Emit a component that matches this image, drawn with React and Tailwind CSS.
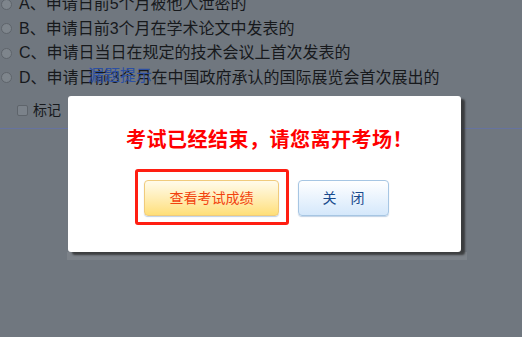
import React from "react";

const font = {
  fontFamily: '"Liberation Sans", Arial, "Noto Sans CJK SC", sans-serif',
};

const options = [
  "A、申请日前5个月被他人泄密的",
  "B、申请日前3个月在学术论文中发表的",
  "C、申请日当日在规定的技术会议上首次发表的",
  "D、申请日前3个月在中国政府承认的国际展览会首次展出的",
];

function Radio() {
  return (
    <span className="w-[11px] h-[11px] rounded-full border border-[#5e646b] bg-[#7e858c] mr-[7px] shrink-0" />
  );
}

export default function App() {
  return (
    <div
      className="relative w-[522px] h-[337px] overflow-hidden bg-[#70777f]"
      style={font}
    >
      {/* page under the mask */}
      <div className="relative mt-[-8px]">
        {options.map((o) => (
          <div
            key={o}
            className="flex items-center h-[24.5px] pl-[1px] text-[16px] text-[#17191c] whitespace-nowrap"
          >
            <Radio />
            <span>{o}</span>
          </div>
        ))}
        <span className="absolute left-[88px] top-[74px] text-[16px] leading-[20px] text-[#2c4fa3]">
          漏题提示
        </span>
        <div className="flex items-center h-[39px] pl-[17px] pt-[2px] text-[14px] text-[#17191c] border-b border-[#6673a0]">
          <span className="w-[11px] h-[11px] rounded-[2px] border border-[#5e646b] bg-[#7b828a] mr-[5px]" />
          <span>标记</span>
        </div>
      </div>

      {/* dialog */}
      <div className="absolute left-[67px] top-[252px] w-[400px] h-[8px] bg-[#7c8289]" />
      <div className="absolute left-[68px] top-[96px] w-[393px] h-[156px] bg-white rounded-[3px] shadow-[4px_3px_2px_rgba(40,40,40,0.75)]">
        <div
          className="pt-[29px] pl-[10px] text-center text-[20px] leading-[28px] font-bold tracking-[0.5px] text-[#ff0000]"
          style={{ fontFamily: '"Noto Sans CJK SC", sans-serif' }}
        >
          考试已经结束，请您离开考场！
        </div>
        <div className="flex items-start mt-[16px] pl-[67px]">
          <div className="border-[3px] border-[#ff1e12] rounded-[3px] pl-[6px] pr-[7px] pt-[8px] pb-[6px]">
            <button className="w-[135px] h-[36px] rounded-[4px] border border-[#f0cb7c] bg-gradient-to-b from-[#fffbeb] to-[#ffdf78] text-[14px] text-[#f2420e] shadow-[0_1px_1px_rgba(0,70,150,0.25)]">
              查看考试成绩
            </button>
          </div>
          <button className="ml-[9px] mt-[11px] w-[91px] h-[36px] rounded-[4px] border border-[#a7c6e3] bg-gradient-to-b from-[#ffffff] to-[#d5e8fb] text-[14px] text-[#1a4b8d] shadow-[0_1px_1px_rgba(0,70,150,0.25)]">
              关　闭
          </button>
        </div>
      </div>
    </div>
  );
}
